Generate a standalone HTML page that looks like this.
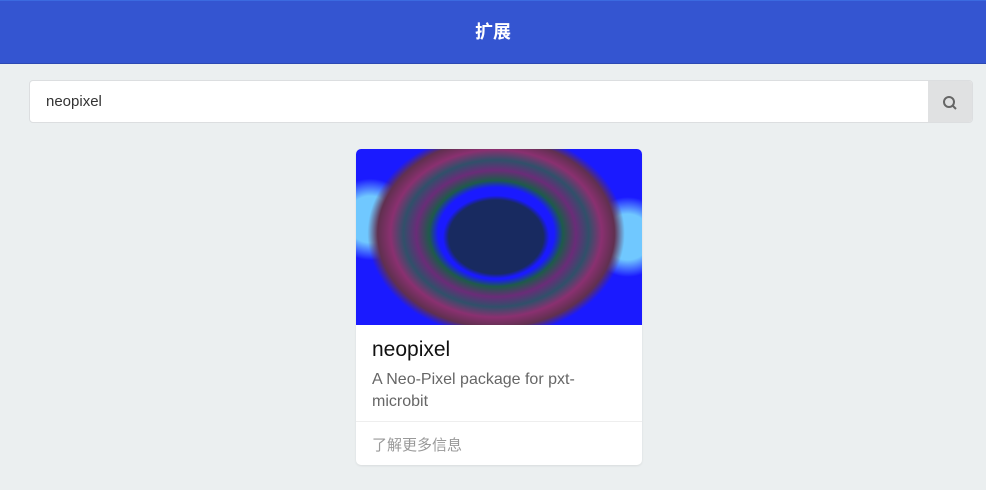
<!DOCTYPE html>
<html><head><meta charset="utf-8"><style>
*{box-sizing:border-box;margin:0;padding:0}
body{width:986px;height:490px;background:#ebeff0;font-family:"Liberation Sans","Noto Sans CJK SC",sans-serif;position:relative;overflow:hidden}
.hdr{position:absolute;left:0;top:0;width:986px;height:64px;background:#3455d1;border-top:1px solid #3b6ae0;border-bottom:1px solid #2c49b3;color:#fff;font-size:18px;font-weight:bold;text-align:center;line-height:62px}
.search{position:absolute;left:29px;top:80px;width:944px;height:43px;background:#fff;border:1px solid #dcdee0;border-radius:4px;overflow:hidden}
.search .t{position:absolute;left:16px;top:12px;font-size:15px;color:#333}
.search .b{position:absolute;right:0;top:0;width:44px;height:43px;background:#e0e1e2}
.card{position:absolute;left:356px;top:149px;width:286px;height:316px;background:#fff;border-radius:5px;overflow:hidden;box-shadow:0 1px 2px rgba(0,0,0,.08)}
.img{height:176px;background:
radial-gradient(ellipse 30% 38% at 49% 50%,#182a60 0 55%,transparent 62%),
radial-gradient(ellipse 45% 58% at 49% 48%,transparent 45%,#1e5a4a 52%,#6a2c78 62%,#30506a 72%,#8a3070 82%,#603050 92%,transparent 100%),
radial-gradient(circle at 5% 40%,#70c8ff 0 8%,transparent 14%),
radial-gradient(circle at 95% 50%,#70c8ff 0 8%,transparent 14%),
#1a1aff}
.name{position:absolute;left:16px;top:189px;font-size:21px;color:#111}
.desc{position:absolute;left:16px;top:220px;font-size:16px;line-height:22px;color:#666;width:240px}
.sep{position:absolute;left:0;top:272px;width:286px;border-top:1px solid #eee}
.more{position:absolute;left:16px;top:285px;font-size:15px;color:#999}
</style></head><body>
<div class="hdr">扩展</div>
<div class="search"><div class="t">neopixel</div><div class="b"><svg width="44" height="43" viewBox="0 0 44 43"><circle cx="21" cy="21" r="5" fill="none" stroke="#666" stroke-width="2"/><line x1="25" y1="25" x2="28" y2="28" stroke="#666" stroke-width="2"/></svg></div></div>
<div class="card"><div class="img"></div>
<div class="name">neopixel</div>
<div class="desc">A Neo-Pixel package for pxt-microbit</div>
<div class="sep"></div>
<div class="more">了解更多信息</div></div>
</body></html>
